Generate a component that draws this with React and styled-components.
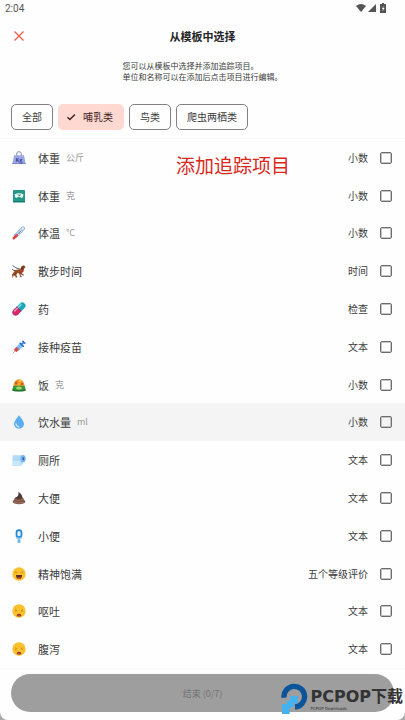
import React, { useState } from "react";
import styled, { createGlobalStyle } from "styled-components";

const color = {
    white: "#fefefe",
    black: "#262626",
    text: "#3c3c3c",
    lightText: "#9b9b9b",
    coral: "#e8604f",
    pink: "#ffd8d2",
    hover: "#f4f4f4",
    line: "#f9f8f8",
    disabled: "#9e9e9e",
    red: "#d9271c",
};

const GlobalStyle = createGlobalStyle`
*{box-sizing:border-box;}
body{margin:0;background:#a8a8a8;color:${color.text};font-family:"Noto Sans CJK SC",sans-serif;font-size:9px;}
button{font-family:inherit;}
`;

const Screen = styled.div`
min-height:100vh;display:flex;flex-direction:column;background:${color.white};border-radius:0 0 8px 8px;
`;

const StatusBar = styled.div`
height:16px;padding:0 18px 0 5px;display:flex;align-items:center;justify-content:space-between;font-family:Roboto,sans-serif;font-size:10px;color:#555;
& svg{display:block;width:32px;height:12px;}
`;

const Header = styled.header`
height:40px;padding:0 12px;display:grid;grid-template-columns:14px 1fr 14px;align-items:center;
`;

const CloseButton = styled.button`
width:14px;height:14px;padding:0;border:0;background:none;color:${color.coral};
& svg{display:block;}
`;

const Title = styled.h1`
margin:0;text-align:center;font-size:11px;line-height:16px;font-weight:700;color:${color.black};
`;

const Intro = styled.p`
margin:0 auto;padding:4px 0 0;font-size:8px;line-height:11px;color:${color.text};
`;

const Filters = styled.div`
display:flex;gap:5px;padding:22px 11px 8px;border-bottom:1px solid ${color.line};
`;

const Chip = styled.button`
height:26px;padding:0 10px;display:flex;align-items:center;gap:7px;font-size:10px;line-height:16px;white-space:nowrap;border-radius:5px;
border:1px solid ${(p) => (p.$active ? color.pink : "#858080")};
background:${(p) => (p.$active ? color.pink : "transparent")};
color:${(p) => (p.$active ? "#3b2522" : color.text)};
padding-left:${(p) => (p.$active ? "7px" : "10px")};
& svg{display:block;}
`;

const Content = styled.main`
position:relative;flex:1;display:flex;
`;

const Items = styled.ul`
flex:1;margin:0;padding:0;list-style:none;display:grid;grid-auto-rows:minmax(36px,1fr);
`;

const Row = styled.label`
height:100%;padding:0 13px 0 12px;display:flex;align-items:center;background:${(p) => (p.$hovered ? color.hover : "transparent")};
& svg{display:block;width:14px;height:14px;margin-right:12px;}
`;

const Name = styled.span`
font-size:11px;line-height:16px;
`;

const Unit = styled.span`
margin-left:6px;font-size:9px;line-height:16px;color:${color.lightText};
`;

const Type = styled.span`
margin:0 12px 0 auto;font-size:10px;line-height:16px;
`;

const Checkbox = styled.input`
appearance:none;width:12px;height:12px;margin:0;border:1px solid #6e6e6e;border-radius:2px;box-shadow:inset 0 0 0 1px #c4c4c4;
&:checked{background:${color.coral};}
`;

const Annotation = styled.div`
position:absolute;top:12px;left:176px;font-size:19px;line-height:28px;color:${color.red};
`;

const Footer = styled.footer`
position:relative;padding:5px 11px 8px;border-top:1px solid ${color.line};
`;

const DoneButton = styled.button`
display:block;width:100%;height:38px;border:0;border-radius:19px;background:${color.disabled};color:#747474;font-size:9px;
`;

const Watermark = styled.div`
position:absolute;right:2px;bottom:5px;display:flex;align-items:center;gap:2px;color:#333;font-weight:700;white-space:nowrap;
& svg{display:block;width:27px;height:32px;}
`;

const Brand = styled.div`
font-family:"DejaVu Sans","Noto Sans CJK SC",sans-serif;font-size:16px;line-height:18px;
& small{display:block;font-size:4px;line-height:5px;font-weight:400;}
`;

const icons = {
    weight: (
        <>
            <path d="M14 15V9a7 7 0 0 1 14 0v6" fill="none" stroke="#8388b4" strokeWidth="3" />
            <path d="M6 13h30l5 26H1z" fill="#9ca8e4" />
            <path d="M1 36h40v3H1z" fill="#7885c8" />
            <text x="21" y="33" textAnchor="middle" fontSize="16" fontWeight="700" fill="#3b3f99">Kg</text>
        </>
    ),
    scale: (
        <>
            <rect x="3" y="3" width="36" height="37" rx="2" fill="#26988a" />
            <path d="M3 36h36v4H3z" fill="#147a6e" />
            <path d="M8 16q13-7 26 0q1 9-5 11l-5-3h-6l-5 3q-6-3-5-11z" fill="#e8faf5" />
            <path d="M14 18q7-4 14 0l-7 3z" fill="#7fb6ae" />
            <path d="M21 22l4-5" stroke="#345" strokeWidth="2" />
        </>
    ),
    thermometer: (
        <>
            <path d="M12 29L33 7" stroke="#92b0d6" strokeWidth="12" strokeLinecap="round" />
            <path d="M14 27L33 7" stroke="#d7e8fa" strokeWidth="7" strokeLinecap="round" />
            <path d="M13 29L27 14" stroke="#7a83b8" strokeWidth="3" />
            <path d="M27 10l5 5M23 14l5 5M19 18l5 5" stroke="#6a87b5" strokeWidth="1.5" />
            <path d="M5 37l9-9" stroke="#e23b39" strokeWidth="7" strokeLinecap="round" />
        </>
    ),
    dog: (
        <>
            <path d="M2 5l13 8 13 3" fill="none" stroke="#596a78" strokeWidth="3" />
            <path d="M10 18l17-3 3-9 6-2 5 6-4 3-3 10-5 5 7 4-2 3-9-5-8-3-4 5 3 8-4 1-5-9-6 5 2 4-4-1-2-5 6-7z" fill="#9a4c28" />
            <path d="M10 20q-7 0-9-5" fill="none" stroke="#82401f" strokeWidth="3" />
            <path d="M29 7l-3 9 5 2 3-8z" fill="#652d18" />
            <path d="M28 17l6 4" stroke="#d9362f" strokeWidth="3" />
            <path d="M24 26l1 12h4M12 27l-8 10" fill="none" stroke="#6e351d" strokeWidth="3" />
            <circle cx="35" cy="8" r="1.2" fill="#222" />
        </>
    ),
    pill: (
        <>
            <path d="M11 31L31 11" stroke="#1aa9bd" strokeWidth="19" strokeLinecap="round" />
            <path d="M11 31l10-10" stroke="#dc2468" strokeWidth="19" />
            <circle cx="11" cy="31" r="9.5" fill="#dc2468" />
            <path d="M8 27L27 8" stroke="#fff" strokeWidth="4" strokeLinecap="round" opacity=".55" />
            <path d="M14 14l14 14" stroke="#a81850" strokeWidth="2" />
        </>
    ),
    syringe: (
        <>
            <path d="M2 40l8-8" stroke="#8795a2" strokeWidth="2" />
            <path d="M15 28L31 12" stroke="#63b0ef" strokeWidth="13" />
            <path d="M9 33l8-8" stroke="#e04a45" strokeWidth="11" />
            <path d="M16 17l10 10M20 13l10 10" stroke="#d2ebfd" strokeWidth="2" />
            <path d="M23 8l12 12" stroke="#2869ce" strokeWidth="4" />
            <path d="M29 13l7-7" stroke="#387cdb" strokeWidth="5" />
            <path d="M31 2l9 9" stroke="#2869ce" strokeWidth="4" />
        </>
    ),
    food: (
        <>
            <path d="M4 25Q6 5 21 4q15 1 17 21z" fill="#ef9228" />
            <circle cx="13" cy="15" r="4" fill="#cf5a1b" />
            <circle cx="24" cy="9" r="4" fill="#ffc644" />
            <circle cx="30" cy="18" r="4" fill="#d95e1c" />
            <circle cx="20" cy="19" r="4" fill="#f7b233" />
            <path d="M4 23h34l3 13q-20 7-40 0z" fill="#35973b" />
            <path d="M1 34q20 6 40 0v4q-20 5-40 0z" fill="#22712d" />
            <path d="M13 28q8-5 16 0v5q-8 3-16 0z" fill="#a5d36b" />
        </>
    ),
    drop: (
        <>
            <path d="M21 1q15 18 15 26a15 14 0 0 1-30 0Q6 19 21 1z" fill="#5caef0" />
            <path d="M12 27q1 7 8 9" fill="none" stroke="#d4edff" strokeWidth="4" strokeLinecap="round" />
        </>
    ),
    paper: (
        <>
            <path d="M2 7h31v25q-4 3-8 7H2z" fill="#b2dafa" />
            <path d="M2 22h23v17H2z" fill="#c9e7fc" />
            <path d="M2 21h24" stroke="#8cc1ed" strokeWidth="2" strokeDasharray="4 2" />
            <ellipse cx="33" cy="17" rx="8" ry="11" fill="#79b6ed" />
            <ellipse cx="34" cy="17" rx="3" ry="5" fill="#3567b0" />
        </>
    ),
    poop: (
        <>
            <ellipse cx="21" cy="32" rx="19" ry="8" fill="#84594b" />
            <ellipse cx="21" cy="25" rx="14" ry="7" fill="#745044" />
            <path d="M10 20q12-5 9-17 12 6 12 17-10 7-21 0z" fill="#4d3a36" />
            <path d="M8 26q12 7 25-1M5 33q15 7 31 0" fill="none" stroke="#a87968" strokeWidth="2" />
        </>
    ),
    toilet: (
        <>
            <rect x="11" y="1" width="20" height="27" rx="10" fill="#2585cf" />
            <rect x="16" y="6" width="10" height="16" rx="5" fill="#ddf1fd" />
            <path d="M11 22q10 8 20 0l-3 9H14z" fill="#8cc9f7" />
            <path d="M18 31h6l2 10H16z" fill="#69b0e9" />
        </>
    ),
    happy: (
        <>
            <circle cx="21" cy="21" r="20" fill="#fbc12d" />
            <path d="M8 17q4-5 8 0M26 17q4-5 8 0" fill="none" stroke="#a8691c" strokeWidth="2" />
            <path d="M12 24h18q0 12-9 12t-9-12z" fill="#5d2e22" />
            <path d="M15 33q6-5 12 0-6 4-12 0z" fill="#f04b43" />
        </>
    ),
    sick: (
        <>
            <circle cx="21" cy="21" r="20" fill="#fbc12d" />
            <path d="M9 17l6 3-6 3M33 17l-6 3 6 3" fill="none" stroke="#b58029" strokeWidth="2" />
            <path d="M14 36q0-7 7-7t7 7q-7 3-14 0z" fill="#923727" />
            <path d="M17 35q4-4 8 0-4 2-8 0z" fill="#ed4c3d" />
        </>
    ),
};

const filters = ["全部", "哺乳类", "鸟类", "爬虫两栖类"];

const items = [
    { "id": 1, "icon": "weight", "name": "体重", "unit": "公斤", "type": "小数" },
    { "id": 2, "icon": "scale", "name": "体重", "unit": "克", "type": "小数" },
    { "id": 3, "icon": "thermometer", "name": "体温", "unit": "°C", "type": "小数" },
    { "id": 4, "icon": "dog", "name": "散步时间", "type": "时间" },
    { "id": 5, "icon": "pill", "name": "药", "type": "检查" },
    { "id": 6, "icon": "syringe", "name": "接种疫苗", "type": "文本" },
    { "id": 7, "icon": "food", "name": "饭", "unit": "克", "type": "小数" },
    { "id": 8, "icon": "drop", "name": "饮水量", "unit": "ml", "type": "小数", "hovered": true },
    { "id": 9, "icon": "paper", "name": "厕所", "type": "文本" },
    { "id": 10, "icon": "poop", "name": "大便", "type": "文本" },
    { "id": 11, "icon": "toilet", "name": "小便", "type": "文本" },
    { "id": 12, "icon": "happy", "name": "精神饱满", "type": "五个等级评价" },
    { "id": 13, "icon": "sick", "name": "呕吐", "type": "文本" },
    { "id": 14, "icon": "sick", "name": "腹泻", "type": "文本" },
];

const App = () => {
    const [filter, setFilter] = useState("哺乳类");

    return (
        <Screen lang="zh-CN">
            <GlobalStyle />
            <StatusBar>
                <span>2:04</span>
                <svg viewBox="0 0 32 12" fill="#555">
                    <path d="M1 4q5-4 10 0L6 10z" />
                    <path d="M21 2v8h-8z" />
                    <path d="M27 1h2v1h2v9h-6V2h2z" />
                    <path d="M28.5 4L27 7h1l-.5 2.500L29.500 6h-1.200z" fill="#fff" />
                </svg>
            </StatusBar>
            <Header>
                <CloseButton aria-label="关闭">
                    <svg width="14" height="14" viewBox="0 0 14 14" fill="none" stroke="currentColor" strokeWidth="1.400">
                        <path d="M2.500 2.500l9 9M11.500 2.500l-9 9" />
                    </svg>
                </CloseButton>
                <Title>从模板中选择</Title>
            </Header>
            <Intro>
                您可以从模板中选择并添加追踪项目。<br />
                单位和名称可以在添加后点击项目进行编辑。
            </Intro>
            <Filters>
                {filters.map((name) => (
                    <Chip key={name} $active={name === filter} aria-pressed={name === filter} onClick={() => setFilter(name)}>
                        {name === filter && (
                            <svg width="10" height="10" viewBox="0 0 10 10" fill="none" stroke="currentColor" strokeWidth="1.400">
                                <path d="M1.500 5.200l2.400 2.300 5-5" />
                            </svg>
                        )}
                        {name}
                    </Chip>
                ))}
            </Filters>
            <Content>
                <Items>
                    {items.map((item) => (
                        <li key={item.id}>
                            <Row $hovered={item.hovered}>
                                <svg viewBox="0 0 42 42">{icons[item.icon]}</svg>
                                <Name>{item.name}</Name>
                                {item.unit && <Unit>{item.unit}</Unit>}
                                <Type>{item.type}</Type>
                                <Checkbox type="checkbox" />
                            </Row>
                        </li>
                    ))}
                </Items>
                <Annotation>添加追踪项目</Annotation>
            </Content>
            <Footer>
                <DoneButton disabled>结束 (0/7)</DoneButton>
                <Watermark>
                    <svg viewBox="0 0 81 96">
                        <path d="M9 44A31 31 0 1 1 42 72" fill="none" stroke="#0b5499" strokeWidth="16" />
                        <path d="M28 39h22v22H28z" fill="#42b2f1" />
                        <path d="M3 63h23v30H3z" fill="#42b2f1" />
                        <path d="M18 52h20v20H18z" fill="#42b2f1" />
                    </svg>
                    <Brand>PCPOP下载<small>PCPOP Downloads</small></Brand>
                </Watermark>
            </Footer>
        </Screen>
    );
};

export default App;
